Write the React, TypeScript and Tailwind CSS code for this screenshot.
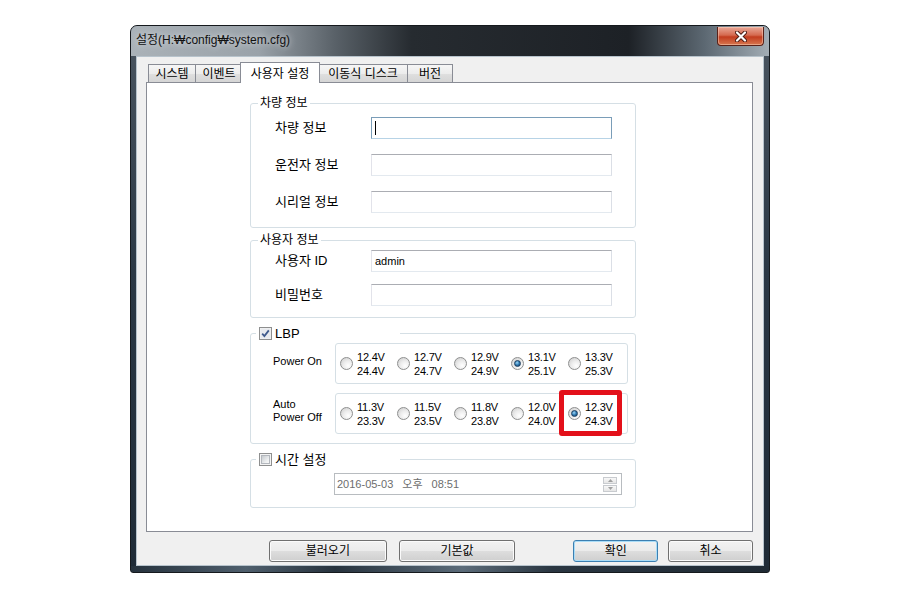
import React from "react";

const powerOn = [
  ["12.4V", "24.4V"],
  ["12.7V", "24.7V"],
  ["12.9V", "24.9V"],
  ["13.1V", "25.1V"],
  ["13.3V", "25.3V"],
];

const powerOff = [
  ["11.3V", "23.3V"],
  ["11.5V", "23.5V"],
  ["11.8V", "23.8V"],
  ["12.0V", "24.0V"],
  ["12.3V", "24.3V"],
];

function Radio({ checked }: { checked?: boolean }) {
  return (
    <span className="flex items-center justify-center shrink-0 w-[13px] h-[13px] rounded-full border border-[#8e8f8f] bg-[radial-gradient(circle_at_65%_70%,#ffffff,#ececec_45%,#c9c9c9)]">
      {checked && (
        <span className="w-[7px] h-[7px] rounded-full border border-[#1b3d5e] bg-[radial-gradient(circle_at_40%_35%,#9fd8f7,#2f7ab3_50%,#0f3a60)]" />
      )}
    </span>
  );
}

function CheckBox({ checked }: { checked?: boolean }) {
  return (
    <span className="flex items-center justify-center shrink-0 w-[13px] h-[13px] border border-[#8e8f8f] bg-[#f4f4f4]">
      {checked ? (
        <svg width="11" height="11" viewBox="0 0 11 11">
          <rect x="0.5" y="0.5" width="10" height="10" fill="#e8eaee" />
          <path d="M2.2 5.6 L4.4 8 L8.8 2.4" fill="none" stroke="#3f5a8c" strokeWidth="1.8" />
        </svg>
      ) : (
        <span className="w-[9px] h-[9px] border border-[#b3b7bd] bg-[linear-gradient(135deg,#c6cace,#eef0f1_70%,#f8f8f8)]" />
      )}
    </span>
  );
}

function TextBox({ value, focused }: { value?: string; focused?: boolean }) {
  return (
    <div
      className={`relative flex items-center h-[22px] w-[241px] bg-white pl-[3px] text-[11px] ${
        focused
          ? "border border-[#7a9db8] border-b-[#b7d3e6]"
          : "border border-[#abadb3] border-l-[#e2e3ea] border-r-[#dbdfe6] border-b-[#e3e9ef]"
      }`}
    >
      {focused && <span className="w-px h-[14px] bg-black" />}
      {value && <span className="font-['Liberation_Sans',sans-serif]">{value}</span>}
    </div>
  );
}

function Group({
  title,
  check,
  className,
  children,
}: {
  title: string;
  check?: "on" | "off";
  className: string;
  children: React.ReactNode;
}) {
  return (
    <div className={`relative w-[386px] border border-[#d5dfe5] rounded-[3px] ${className}`}>
      {check ? (
        <div className="absolute left-[5px] top-[-8px] w-[144px] h-[15px] bg-white flex items-center pl-[3px] gap-[3px] text-[13px]">
          <CheckBox checked={check === "on"} />
          <span>{title}</span>
        </div>
      ) : (
        <div className="absolute left-[7px] top-[-8px] h-[15px] bg-white px-[2px] text-[12px] leading-[15px]">
          {title}
        </div>
      )}
      {children}
    </div>
  );
}

function Row({ label, children }: { label: string; children: React.ReactNode }) {
  return (
    <div className="flex items-center h-[22px] pl-[24px]">
      <span className="w-[96px] text-[13px]">{label}</span>
      {children}
    </div>
  );
}

function VoltRow({
  label,
  items,
  selected,
  mark,
}: {
  label: React.ReactNode;
  items: string[][];
  selected: number;
  mark?: boolean;
}) {
  return (
    <div className="flex items-center pl-[22px]">
      <div className="w-[62px] -mt-[5px] text-[11px] leading-[13px] font-['Liberation_Sans',sans-serif]">{label}</div>
      <div className="relative flex items-center w-[293px] h-[41px] pl-[4px] border border-[#d5dfe5] rounded-[3px]">
        {items.map((v, i) => (
          <div key={v[0]} className="flex items-center gap-[4px] w-[57px]">
            <Radio checked={i === selected} />
            <div className="text-[11px] leading-[14px] font-['Liberation_Sans',sans-serif] tracking-[-0.2px]">
              <div>{v[0]}</div>
              <div>{v[1]}</div>
            </div>
          </div>
        ))}
        {mark && (
          <div className="absolute left-[223px] top-[-4px] w-[63px] h-[46px] border-[5px] border-[#e3101a] rounded-[3px]" />
        )}
      </div>
    </div>
  );
}

function WinButton({ label, focused, className }: { label: string; focused?: boolean; className: string }) {
  return (
    <button
      className={`h-[22px] rounded-[3px] border text-[12px] leading-none bg-[linear-gradient(#f2f2f2,#ebebeb_48%,#dddddd_52%,#cfcfcf)] ${
        focused
          ? "border-[#3c7fb1] shadow-[inset_0_0_0_1px_#a9dcf7]"
          : "border-[#707070] shadow-[inset_0_0_0_1px_#fbfbfb]"
      } ${className}`}
    >
      {label}
    </button>
  );
}

const tabIdle =
  "flex items-center justify-center h-[18px] border border-b-0 border-[#898c95] text-[12px] bg-[linear-gradient(#f6f6f6,#ececec_50%,#dfdfdf_52%,#d5d5d5)]";

export default function App() {
  return (
    <div className="w-[900px] h-[600px] bg-white pt-[25px] pl-[130px] text-black font-['Liberation_Sans','Noto_Sans_CJK_KR',sans-serif]">
      <div className="flex flex-col w-[640px] h-[548px] rounded-t-[7px] rounded-b-[3px] border border-[#15191d] bg-[linear-gradient(180deg,#4b5661,#2b3845_45%,#1f2b37)] overflow-hidden">
        {/* title bar */}
        <div className="flex items-start justify-between h-[30px] bg-[linear-gradient(90deg,#aab2b8_0%,#9aa2a9_20%,#596168_32%,#262b30_44%,#1d2126_78%,#5d6973_90%,#a3adb5_100%)]">
          <span className="pl-[5px] pt-[7px] text-[12px] leading-[14px] text-[#111] [text-shadow:0_0_6px_#e6e9ec]">
            설정(H:₩config₩system.cfg)
          </span>
          <div className="flex items-center justify-center mt-px mr-[5px] w-[47px] h-[19px] rounded-b-[4px] border border-t-0 border-[#5a2118] bg-[linear-gradient(#e9a898,#d56a50_45%,#c23c1f_55%,#d7774f)] shadow-[inset_0_0_0_1px_rgba(255,220,200,0.45)]">
            <svg width="12" height="11" viewBox="0 0 12 11">
              <path d="M2 1.5 L10 9.5 M10 1.5 L2 9.5" stroke="#4a1a12" strokeWidth="4" strokeLinecap="round" />
              <path d="M2 1.5 L10 9.5 M10 1.5 L2 9.5" stroke="#ffffff" strokeWidth="2.2" strokeLinecap="round" />
            </svg>
          </div>
        </div>

        {/* frame + client */}
        <div className="flex flex-1">
          <div className="w-[5px]" />
          <div className="w-[628px] bg-[#f0f0f0] border border-[#b7c3cc] flex flex-col pl-[9px] pr-[10px] pt-[5px]">
            {/* tabs */}
            <div className="flex items-end h-[20px] pl-[2px]">
              <div className={`${tabIdle} w-[48px]`}>시스템</div>
              <div className={`${tabIdle} w-[48px] -ml-px`}>이벤트</div>
              <div className="relative z-10 flex items-start justify-center pt-[2px] h-[21px] -mb-px -ml-[3px] w-[80px] border border-b-0 border-[#898c95] bg-white text-[12px]">
                사용자 설정
              </div>
              <div className={`${tabIdle} w-[90px] -ml-[2px]`}>이동식 디스크</div>
              <div className={`${tabIdle} w-[46px] -ml-px`}>버전</div>
            </div>

            {/* panel */}
            <div className="h-[450px] border border-[#898c95] bg-white pt-[20px] pl-[103px] flex flex-col">
              <Group title="차량 정보" className="h-[125px]">
                <div className="flex flex-col gap-[15px] pt-[13px]">
                  <Row label="차량 정보">
                    <TextBox focused />
                  </Row>
                  <Row label="운전자 정보">
                    <TextBox />
                  </Row>
                  <Row label="시리얼 정보">
                    <TextBox />
                  </Row>
                </div>
              </Group>

              <Group title="사용자 정보" className="h-[78px] mt-[12px]">
                <div className="flex flex-col gap-[12px] pt-[9px]">
                  <Row label="사용자 ID">
                    <TextBox value="admin" />
                  </Row>
                  <Row label="비밀번호">
                    <TextBox />
                  </Row>
                </div>
              </Group>

              <Group title="LBP" check="on" className="h-[111px] mt-[15px]">
                <div className="flex flex-col gap-[9px] pt-[9px]">
                  <VoltRow label="Power On" items={powerOn} selected={3} />
                  <VoltRow
                    label={
                      <>
                        <div>Auto</div>
                        <div>Power Off</div>
                      </>
                    }
                    items={powerOff}
                    selected={4}
                    mark
                  />
                </div>
              </Group>

              <Group title="시간 설정" check="off" className="h-[49px] mt-[15px]">
                <div className="pt-[13px] pl-[83px]">
                  <div className="flex items-center h-[22px] w-[288px] border border-[#b8bcc0] bg-white pl-[2px] text-[11px] text-[#6d6d6d]">
                    <span>2016-05-03</span>
                    <span className="ml-[9px]">오후</span>
                    <span className="ml-[9px]">08:51</span>
                    <div className="ml-auto mr-[4px] flex flex-col gap-px">
                      <span className="flex items-center justify-center w-[14px] h-[7px] border border-[#c8cbcf] bg-[linear-gradient(#f8f8f8,#e6e6e6)]">
                        <svg width="5" height="3" viewBox="0 0 5 3">
                          <path d="M0 3 L2.5 0 L5 3 Z" fill="#a0a0a0" />
                        </svg>
                      </span>
                      <span className="flex items-center justify-center w-[14px] h-[7px] border border-[#c8cbcf] bg-[linear-gradient(#f8f8f8,#e6e6e6)]">
                        <svg width="5" height="3" viewBox="0 0 5 3">
                          <path d="M0 0 L2.5 3 L5 0 Z" fill="#a0a0a0" />
                        </svg>
                      </span>
                    </div>
                  </div>
                </div>
              </Group>
            </div>

            {/* buttons */}
            <div className="flex mt-[8px] pl-[123px]">
              <WinButton label="불러오기" className="w-[118px]" />
              <WinButton label="기본값" className="w-[117px] ml-[12px]" />
              <WinButton label="확인" focused className="w-[85px] ml-[58px]" />
              <WinButton label="취소" className="w-[85px] ml-[10px]" />
            </div>
          </div>
          <div className="w-[5px]" />
        </div>
        <div className="h-[6px] bg-[linear-gradient(90deg,#26323d,#4f5f6d_18%,#27333e_32%,#5b6b79_52%,#2a3641_66%,#1f2a34)]" />
      </div>
    </div>
  );
}
